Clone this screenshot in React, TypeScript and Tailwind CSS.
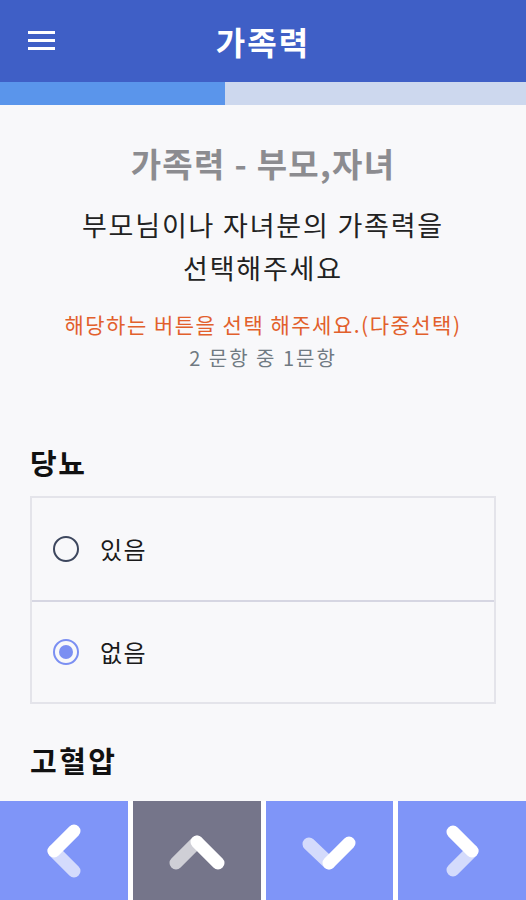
import React, { useState } from "react";

const font = { fontFamily: '"Noto Sans CJK KR", "Noto Sans", sans-serif' };

type Dir = "left" | "up" | "down" | "right";
type Seg = [number, number, number, number];

// each chevron is two thick strokes; the "shadow" arm is drawn first in a lighter tone
const arms: Record<Dir, { light: Seg; solid: Seg }> = {
  left: { light: [30, 40, 50, 60], solid: [50, 20, 30, 40] },
  up: { light: [40, 31, 19, 52], solid: [40, 31, 61, 52] },
  down: { light: [20, 33, 40, 52], solid: [40, 52, 60, 32] },
  right: { light: [50, 40, 31, 59], solid: [31, 21, 50, 40] },
};

const Chevron = ({ dir, light }: { dir: Dir; light: string }) => {
  const a = arms[dir];
  return (
    <svg width="80" height="80" viewBox="0 0 80 80">
      <line x1={a.light[0]} y1={a.light[1]} x2={a.light[2]} y2={a.light[3]} stroke={light} strokeWidth="13" strokeLinecap="round" />
      <line x1={a.solid[0]} y1={a.solid[1]} x2={a.solid[2]} y2={a.solid[3]} stroke="#ffffff" strokeWidth="13" strokeLinecap="round" />
    </svg>
  );
};

const Radio = ({ checked }: { checked: boolean }) => (
  <span
    className={
      "flex h-[26px] w-[26px] items-center justify-center rounded-full border-2 " +
      (checked ? "border-[#7b8ff2]" : "border-[#3d475e]")
    }
  >
    {checked && <span className="h-[14px] w-[14px] rounded-full bg-[#7b8ff2]" />}
  </span>
);

export default function App() {
  const [answer, setAnswer] = useState("없음");

  return (
    <div className="flex h-[900px] w-full flex-col overflow-hidden bg-[#f8f8fa]" style={font}>
      <header className="relative flex h-[82px] shrink-0 items-center justify-center bg-[#3f5fc6]">
        <div className="absolute left-[28px] top-[31px] flex w-[27px] flex-col gap-[5px]">
          <span className="h-[3px] bg-white" />
          <span className="h-[3px] bg-white" />
          <span className="h-[3px] bg-white" />
        </div>
        <h1 className="text-[32px] font-bold leading-none tracking-[2px] text-white">가족력</h1>
      </header>

      <div className="flex h-[23px] shrink-0 bg-[#cdd8ee]">
        <div className="w-[225px] bg-[#5a95eb]" />
      </div>

      <main className="flex-1 overflow-hidden">
        <section className="flex flex-col items-center pt-[36px] text-center">
          <h2 className="text-[33px] font-bold leading-[44px] tracking-[1.3px] text-[#8c8c90]">가족력 - 부모,자녀</h2>
          <p className="mt-[18px] text-[27px] leading-[43px] tracking-[1.8px] text-[#222]">
            부모님이나 자녀분의 가족력을
            <br />
            선택해주세요
          </p>
          <p className="mt-[20px] text-[21px] leading-[30px] tracking-[1.5px] text-[#e2602c]">
            해당하는 버튼을 선택 해주세요.(다중선택)
          </p>
          <p className="mt-[4px] text-[20px] leading-[30px] tracking-[2px] text-[#707a82]">2 문항 중 1문항</p>
        </section>

        <section className="px-[30px]">
          <h3 className="mt-[71px] text-[29px] font-bold leading-[36px] tracking-[1.5px] text-[#111]">당뇨</h3>
          <div className="mt-[16px] flex flex-col border-2 border-[#e4e4ea]">
            {["있음", "없음"].map((opt, i) => (
              <button
                key={opt}
                onClick={() => setAnswer(opt)}
                className={
                  "flex h-[102px] items-center gap-[21px] pl-[21px] text-left " +
                  (i > 0 ? "border-t-2 border-[#d6d6e2]" : "")
                }
              >
                <Radio checked={answer === opt} />
                <span className="text-[24px] tracking-[1.5px] text-[#1a1a1a]">{opt}</span>
              </button>
            ))}
          </div>
          <h3 className="mt-[38px] text-[29px] font-bold leading-[36px] tracking-[2.5px] text-[#111]">고혈압</h3>
        </section>
      </main>

      <footer className="flex h-[99px] shrink-0 gap-[5px] bg-white">
        <button className="flex flex-1 items-center justify-center bg-[#7f95f8]">
          <Chevron dir="left" light="#d4dbfc" />
        </button>
        <button className="flex flex-1 items-center justify-center bg-[#75758a]">
          <Chevron dir="up" light="#cfcfd6" />
        </button>
        <button className="flex flex-1 items-center justify-center bg-[#7f95f8]">
          <Chevron dir="down" light="#d4dbfc" />
        </button>
        <button className="flex flex-1 items-center justify-center bg-[#7f95f8]">
          <Chevron dir="right" light="#d4dbfc" />
        </button>
      </footer>
    </div>
  );
}
